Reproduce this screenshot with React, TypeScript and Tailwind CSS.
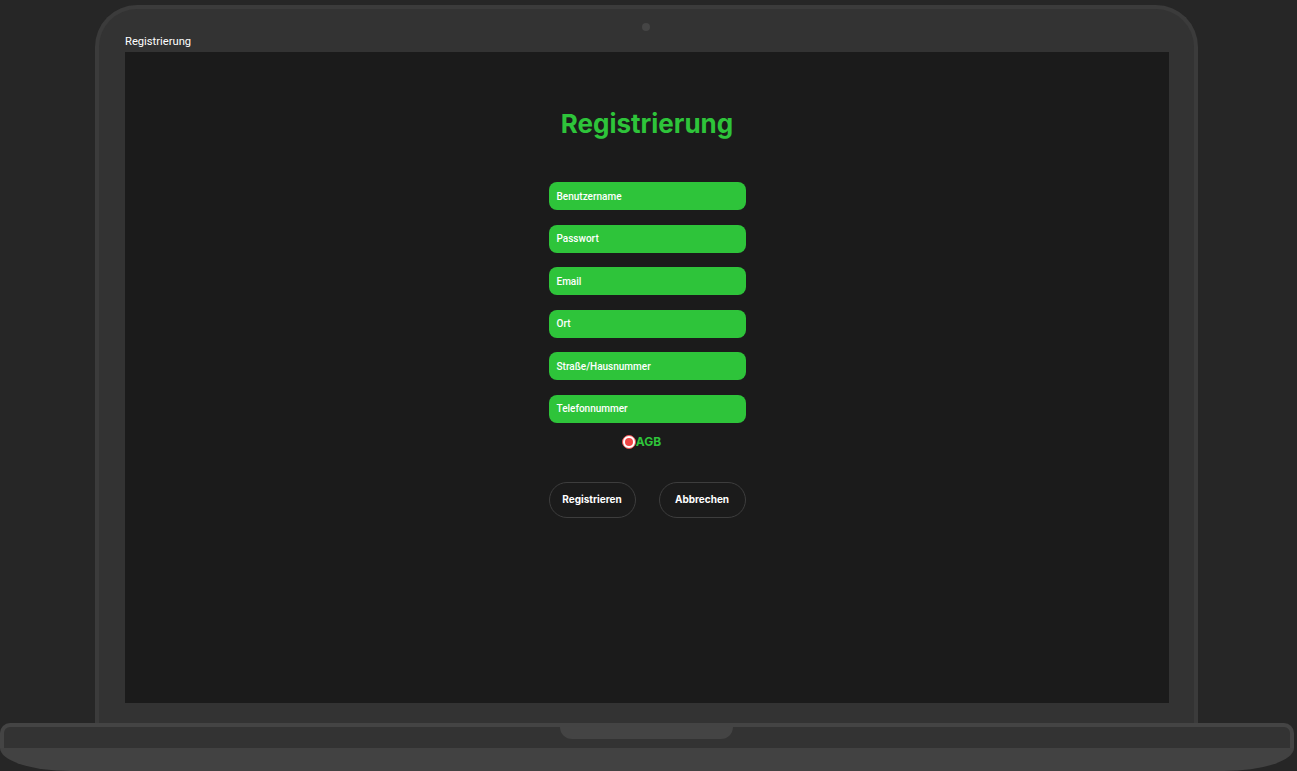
export default function App() {
  const fields = [
    "Benutzername",
    "Passwort",
    "Email",
    "Ort",
    "Straße/Hausnummer",
    "Telefonnummer",
  ];

  return (
    <div
      className="w-[1297px] h-[771px] bg-[#262626] overflow-hidden flex flex-col"
      style={{ fontFamily: "Inter, 'Noto Sans', sans-serif" }}
    >
      {/* laptop lid */}
      <div className="pl-[95px] pt-[5px]">
        <div className="relative w-[1103px] h-[718px] bg-[#333333] border-4 border-b-0 border-[#3b3b3b] rounded-t-[42px] px-[26px]">
          {/* camera */}
          <div className="absolute left-[543px] top-[14px] w-[8px] h-[8px] rounded-full bg-[#454545]" />

          <div className="h-[43px] flex items-end pb-[3px]">
            <span className="text-[11.2px] leading-[14px] text-white font-['Roboto',sans-serif]">
              Registrierung
            </span>
          </div>

          {/* screen */}
          <div className="w-[1044px] h-[651px] bg-[#1b1b1b] flex flex-col items-center">
            <h1 className="mt-[56px] text-[26px] leading-[32px] font-bold text-[#2ec43a]">
              Registrierung
            </h1>

            <div className="mt-[42px] w-[197px] flex flex-col gap-[14.6px]">
              {fields.map((f) => (
                <div
                  key={f}
                  className="h-[28px] rounded-[8px] bg-[#2ec43a] px-[8px] flex items-center text-[10px] font-medium text-white font-['Roboto',sans-serif]"
                >
                  {f}
                </div>
              ))}
            </div>

            <div className="mt-[12px] flex items-center pr-[11px]">
              <span className="w-[14px] h-[14px] rounded-full bg-white border border-[#f05050] flex items-center justify-center">
                <span className="w-[8px] h-[8px] rounded-full bg-[#f04545]" />
              </span>
              <span className="text-[12px] font-bold text-[#2ec43a] leading-[14px]">AGB</span>
            </div>

            <div className="mt-[33px] w-[197px] flex justify-between">
              <button className="w-[87px] h-[36px] rounded-full border border-[#3d3d3d] text-[10px] font-bold text-white">
                Registrieren
              </button>
              <button className="w-[87px] h-[36px] rounded-full border border-[#3d3d3d] text-[10px] font-bold text-white">
                Abbrechen
              </button>
            </div>
          </div>
        </div>
      </div>

      {/* laptop base */}
      <div className="relative w-[1294px]">
        <div className="h-[25px] bg-[#333333] border-4 border-b-0 border-[#444444] rounded-t-[10px]" />
        <div className="h-[23px] bg-[#424242] rounded-bl-[70px_23px] rounded-br-[70px_23px]" />
        <div className="absolute left-[560px] top-[4px] w-[173px] h-[12px] bg-[#444444] rounded-b-[12px]" />
      </div>
    </div>
  );
}
